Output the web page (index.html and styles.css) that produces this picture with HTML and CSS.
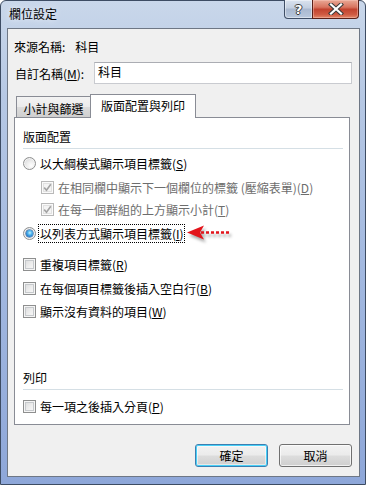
FILE: index.html
```html
<!DOCTYPE html>
<html lang="zh-Hant">
<head>
<meta charset="utf-8">
<title>欄位設定</title>
<link rel="stylesheet" href="styles.css">
</head>
<body>
<div class="window">
  <div class="titlebar">
    <span class="title">欄位設定</span>
    <div class="caption-btns">
      <div class="cbtn help"><span>?</span></div>
      <div class="cbtn close">
        <svg width="16" height="12" viewBox="0 0 16 12">
          <path d="M3 1.5 L13 10.5 M13 1.5 L3 10.5" stroke="#3a3a3a" stroke-width="4.2" stroke-linecap="square" fill="none"/>
          <path d="M3 1.5 L13 10.5 M13 1.5 L3 10.5" stroke="#ffffff" stroke-width="2.2" stroke-linecap="square" fill="none"/>
        </svg>
      </div>
    </div>
  </div>
  <div class="client">
    <div class="row source"><span>來源名稱:</span><span class="src-val">科目</span></div>
    <div class="row custom">
      <span class="custom-label">自訂名稱(<u>M</u>):</span>
      <div class="input">科目</div>
    </div>
    <div class="tabs">
      <div class="tab">小計與篩選</div>
      <div class="tab active">版面配置與列印</div>
    </div>
    <div class="panel">
      <div class="section-title first">版面配置</div>
      <div class="sep"></div>
      <div class="opt r1"><span class="radio"></span><span class="lbl">以大綱模式顯示項目標籤(<u>S</u>)</span></div>
      <div class="opt c1 indent disabled"><span class="check dis"><svg width="11" height="11" viewBox="0 0 11 11"><path d="M2.2 5.6 L4.5 8.2 L8.8 2.2" stroke="#a3a3a3" stroke-width="1.6" fill="none"/></svg></span><span class="lbl">在相同欄中顯示下一個欄位的標籤 (壓縮表單)(<u>D</u>)</span></div>
      <div class="opt c2 indent disabled"><span class="check dis"><svg width="11" height="11" viewBox="0 0 11 11"><path d="M2.2 5.6 L4.5 8.2 L8.8 2.2" stroke="#a3a3a3" stroke-width="1.6" fill="none"/></svg></span><span class="lbl">在每一個群組的上方顯示小計(<u>T</u>)</span></div>
      <div class="opt r2"><span class="radio on"><span class="dot"></span></span><span class="lbl focus">以列表方式顯示項目標籤(<u>I</u>)</span>
        <svg class="arrow" width="46" height="18" viewBox="0 0 46 18">
          <path d="M14 8.5 H42" stroke="#e3141b" stroke-width="2.6" stroke-dasharray="3 2" fill="none"/>
          <polygon points="0,8.5 17,1.5 13,8.5 17,15.5" fill="#e3141b"/>
        </svg>
      </div>
      <div class="opt c3"><span class="check"></span><span class="lbl">重複項目標籤(<u>R</u>)</span></div>
      <div class="opt c4"><span class="check"></span><span class="lbl">在每個項目標籤後插入空白行(<u>B</u>)</span></div>
      <div class="opt c5"><span class="check"></span><span class="lbl">顯示沒有資料的項目(<u>W</u>)</span></div>
      <div class="section-title second">列印</div>
      <div class="sep"></div>
      <div class="opt c6"><span class="check"></span><span class="lbl">每一項之後插入分頁(<u>P</u>)</span></div>
    </div>
    <div class="buttons">
      <div class="btn default">確定</div>
      <div class="btn">取消</div>
    </div>
  </div>
</div>
</body>
</html>
```
FILE: styles.css
```css
* { box-sizing: border-box; }
html, body { margin: 0; padding: 0; }
body {
  width: 366px;
  height: 485px;
  overflow: hidden;
  font-family: "Noto Sans CJK TC", "Noto Sans", sans-serif;
  font-size: 12px;
  color: #000;
  background: #ffffff;
}
.window {
  width: 366px;
  height: 485px;
  border: 1px solid #3d4c63;
  border-radius: 6px 6px 0 0;
  background: linear-gradient(180deg, #c9d7ea 0%, #b6c8e4 20%, #a3b9e0 55%, #8ea7d9 100%);
  display: flex;
  flex-direction: column;
}
.titlebar {
  height: 27px;
  display: flex;
  align-items: flex-start;
}
.title {
  padding-left: 8px;
  line-height: 26px;
  font-size: 12px;
  color: #000;
  text-shadow: 0 0 6px rgba(255,255,255,0.9);
}
.caption-btns {
  margin-left: auto;
  margin-right: 6px;
  margin-top: -1px;
  display: flex;
}
.cbtn {
  height: 19px;
  border: 1px solid #3f4e66;
  border-top: none;
  display: flex;
  align-items: center;
  justify-content: center;
}
.help {
  width: 29px;
  border-radius: 0 0 0 4px;
  background: linear-gradient(180deg, #dae3ef 0%, #c3cfe0 45%, #a9b8cf 50%, #b9c8dd 100%);
  box-shadow: inset 0 0 0 1px rgba(255,255,255,0.45);
}
.help span {
  font-family: "DejaVu Sans", sans-serif;
  font-weight: bold;
  font-size: 13px;
  color: #fff;
  line-height: 1;
  text-shadow: 1px 0 0 #3b3b3b, -1px 0 0 #3b3b3b, 0 1px 0 #3b3b3b, 0 -1px 0 #3b3b3b;
}
.close {
  width: 47px;
  margin-left: -1px;
  border-color: #5a2018;
  border-radius: 0 0 4px 0;
  background: linear-gradient(180deg, #e9a996 0%, #d8745f 40%, #c2432f 52%, #cf5a42 80%, #e3886a 100%);
  box-shadow: inset 0 0 0 1px rgba(255,210,200,0.4);
}
.close svg { display: block; }

.client {
  margin: 0 5px 0 6px;
  height: 449px;
  border: 1px solid #6e7785;
  background: #f0f0f0;
  display: flex;
  flex-direction: column;
}
.row { display: flex; align-items: center; }
.source {
  height: 22px;
  margin-top: 6px;
  padding-left: 6px;
}
.src-val { margin-left: 10px; }
.custom {
  height: 22px;
  margin-top: 5px;
  padding-left: 7px;
}
.custom-label { width: 79px; }
.input {
  width: 258px;
  height: 22px;
  border: 1px solid #c9cbd0;
  border-top-color: #abadb3;
  background: #fff;
  padding-left: 3px;
  line-height: 18px;
}

.tabs {
  height: 23px;
  margin-top: 10px;
  margin-left: 8px;
  display: flex;
  align-items: flex-end;
}
.tab {
  height: 21px;
  width: 75px;
  border: 1px solid #898c95;
  border-bottom: none;
  background: linear-gradient(180deg, #f3f3f3 0%, #ebebeb 50%, #dcdcdc 51%, #cfcfcf 100%);
  display: flex;
  align-items: center;
  justify-content: center;
  padding-top: 2px;
}
.tab.active {
  width: 106px;
  height: 24px;
  margin-left: -1px;
  margin-bottom: -1px;
  background: #fff;
  position: relative;
  z-index: 1;
  padding: 0 0 2px 0;
}

.panel {
  margin-left: 6px;
  width: 336px;
  height: 308px;
  border: 1px solid #898c95;
  background: #fff;
  padding-left: 8px;
  display: flex;
  flex-direction: column;
}
.section-title {
  height: 20px;
  line-height: 20px;
}
.section-title.first { margin-top: 9px; }
.section-title.second { margin-top: 47px; }
.sep {
  height: 1px;
  width: 320px;
  margin-top: 1px;
  background: #d5dfe5;
}
.opt {
  height: 20px;
  display: flex;
  align-items: center;
}
.opt .lbl { margin-left: 4px; white-space: nowrap; }
.indent { padding-left: 18px; }
.disabled .lbl { color: #6d6d6d; }
.r1 { margin-top: 4px; }
.c1 { margin-top: 4px; }
.c2 { margin-top: 2px; }
.r2 { margin-top: 4px; }
.c3 { margin-top: 11px; }
.c4 { margin-top: 4px; }
.c5 { margin-top: 3px; }
.c6 { margin-top: 6px; }

.check {
  width: 13px;
  height: 13px;
  flex: none;
  border: 1px solid #8e8f8f;
  background: linear-gradient(135deg, #d7d8d9 0%, #eeeeee 55%, #fbfbfb 100%);
  box-shadow: inset 0 0 0 1px #f5f5f5, inset 0 0 0 2px #c6c9cc;
  display: flex;
  align-items: center;
  justify-content: center;
}
.check.dis {
  border-color: #b9b9b9;
  background: #f4f4f4;
  box-shadow: inset 0 0 0 1px #fafafa, inset 0 0 0 2px #e1e1e1;
}
.check svg { display: block; }
.radio {
  width: 13px;
  height: 13px;
  flex: none;
  border: 1px solid #8e8f8f;
  border-radius: 50%;
  background: radial-gradient(circle at 65% 70%, #ffffff 0%, #eeeeee 40%, #cfd0d1 100%);
  box-shadow: inset 0 0 0 1px #f4f4f4;
  display: flex;
  align-items: center;
  justify-content: center;
}
.radio.on { background: radial-gradient(circle at 60% 65%, #ffffff 0%, #e8e8e8 50%, #c8c9ca 100%); }
.dot {
  width: 7px;
  height: 7px;
  border-radius: 50%;
  background: radial-gradient(circle at 55% 40%, #c9f1ff 0%, #54b8ee 35%, #1b70c4 75%, #124e96 100%);
  box-shadow: 0 0 0 0.5px #1a4f8a;
}
.r2 .lbl.focus {
  margin-left: 2px;
  height: 19px;
  line-height: 17px;
  border: 1px dotted #000;
  padding: 0 0 0 1px;
}
.arrow {
  margin-left: 2px;
  flex: none;
  filter: drop-shadow(2px 3px 1.5px rgba(0,0,0,0.35));
}

.buttons {
  margin-top: 19px;
  display: flex;
  justify-content: flex-end;
  gap: 11px;
  padding-right: 7px;
}
.btn {
  width: 73px;
  height: 23px;
  border: 1px solid #707070;
  border-radius: 3px;
  background: linear-gradient(180deg, #f2f2f2 0%, #ebebeb 49%, #dddddd 51%, #cfcfcf 100%);
  box-shadow: inset 0 0 0 1px rgba(255,255,255,0.7);
  display: flex;
  align-items: center;
  justify-content: center;
}
.btn.default {
  border-color: #3c7fb1;
  box-shadow: inset 0 0 0 1px #48d0f8, inset 0 0 0 2px rgba(255,255,255,0.5);
}
```
